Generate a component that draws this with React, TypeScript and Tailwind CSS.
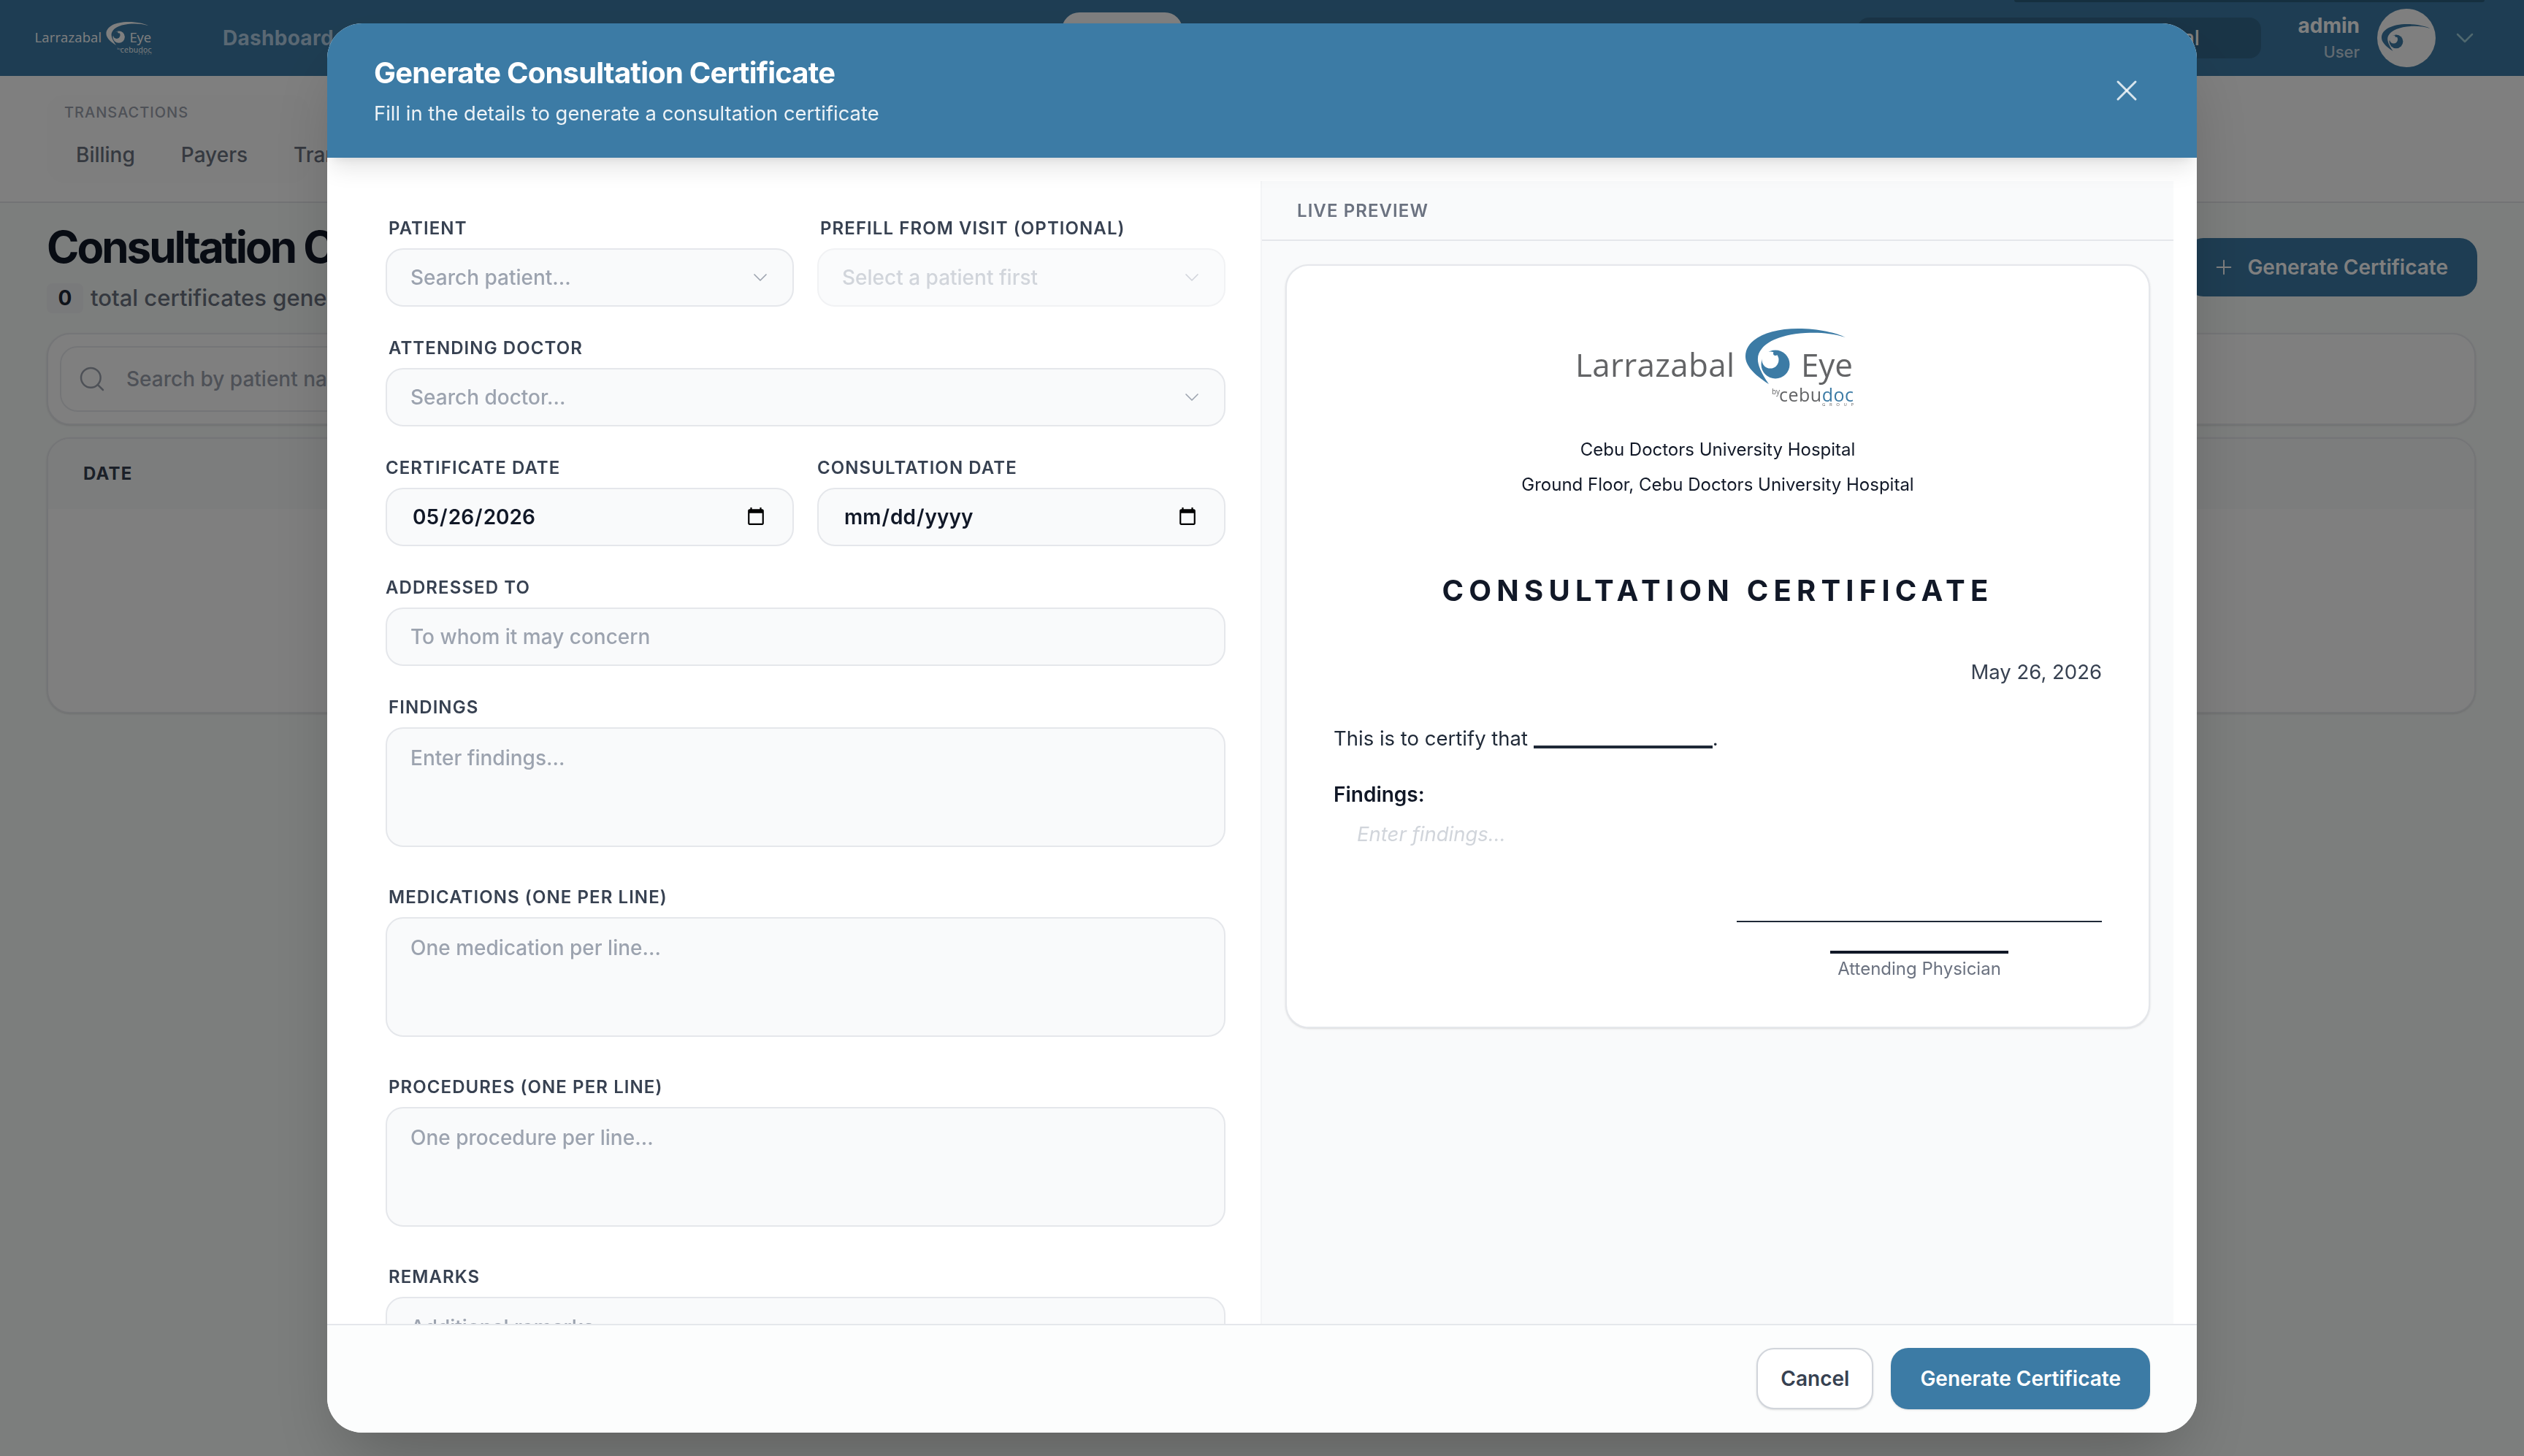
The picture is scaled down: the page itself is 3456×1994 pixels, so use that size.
import type { ReactNode } from "react";
import clsx from "clsx";
import { ChevronDown, Plus, Search, X } from "lucide-react";

const inputBox =
  "w-full rounded-[24px] border-2 border-[#e5e7eb] bg-[#f9fafb] text-[28px] font-medium text-[#111827] outline-none placeholder:text-[#9ca3af]";

const dateBox = "h-[80px] px-[34px] font-semibold";

function EyeMark({ color, spot }: { color: string; spot: string }) {
  return (
    <>
      <path
        d="M32 76C10 62 0 50 0 38C0 15 30 0 72 0C100 0 125 6 137 12C118 6 100 5 82 6C50 8 30 17 22 28C14 38 14 50 32 76Z"
        fill={color}
      />
      <circle cx="41" cy="49" r="19.5" fill={color} />
      <circle cx="34" cy="43" r="11.5" fill={spot} />
      <circle cx="41" cy="34" r="3" fill={color} />
    </>
  );
}

function Logo({ light, className }: { light?: boolean; className: string }) {
  const grey = light ? "#ffffff" : "#636466";
  const blue = light ? "#ffffff" : "#3c7ba5";
  return (
    <svg viewBox="0 0 388 107" className={clsx("overflow-visible", className)}>
      <g fontFamily="'Open Sans', sans-serif">
        <text x="-1" y="66" fontSize="44" fontWeight="400" fill={grey} textLength="218">
          Larrazabal
        </text>
        <text x="308" y="66" fontSize="44" fontWeight="400" fill={grey} textLength="71">
          Eye
        </text>
        <text x="268" y="90" fontSize="10" fill={grey}>
          by
        </text>
        <text x="278" y="100" fontSize="25" fill={grey} textLength="102">
          cebu<tspan fill={blue}>doc</tspan>
        </text>
        <text x="337" y="106" fontSize="6" fill={grey} textLength="43">
          GROUP
        </text>
      </g>
      <g transform="translate(232 0)">
        <EyeMark color={blue} spot={light ? "#3d7ba6" : "#ffffff"} />
      </g>
    </svg>
  );
}

function Field({
  label,
  indent,
  children,
}: {
  label: string;
  indent?: boolean;
  children: ReactNode;
}) {
  return (
    <div>
      <label
        className={clsx(
          "mb-[11px] block pt-[1px] text-[24px] leading-[32px] font-semibold tracking-[0.045em] text-[#374151]",
          indent && "ml-[4px]"
        )}
      >
        {label}
      </label>
      {children}
    </div>
  );
}

function Combo({ placeholder, disabled }: { placeholder: string; disabled?: boolean }) {
  return (
    <div
      className={clsx(
        "flex h-[80px] items-center rounded-[24px] border-2 pr-[28px] pl-[32px]",
        disabled ? "border-[#f1f2f4] bg-[#fafbfc]" : "border-[#e5e7eb] bg-[#f9fafb]"
      )}
    >
      <input
        disabled={disabled}
        placeholder={placeholder}
        className={clsx(
          "min-w-0 flex-1 bg-transparent text-[28px] font-medium outline-none",
          disabled ? "placeholder:text-[#d1d5db]" : "placeholder:text-[#9ca3af]"
        )}
      />
      <ChevronDown
        strokeWidth={1.25}
        className={clsx("h-[32px] w-[32px]", disabled ? "text-[#d1d5db]" : "text-[#9ca3af]")}
      />
    </div>
  );
}

function NoteField({ label, placeholder }: { label: string; placeholder: string }) {
  return (
    <div className="pb-[12px]">
      <Field label={label} indent>
        <textarea
          placeholder={placeholder}
          className={clsx(inputBox, "block h-[164px] resize-none px-[32px] py-[20px] leading-[40px]")}
        />
      </Field>
    </div>
  );
}

function CertificateForm() {
  return (
    <div className="w-[1278px] shrink-0 overflow-hidden pt-[80px] pr-[48px] pl-[80px]">
      <div className="flex flex-col gap-[40px]">
        <div className="grid grid-cols-2 gap-[32px]">
          <Field label="PATIENT" indent>
            <Combo placeholder="Search patient..." />
          </Field>
          <Field label="PREFILL FROM VISIT (OPTIONAL)" indent>
            <Combo placeholder="Select a patient first" disabled />
          </Field>
        </div>
        <Field label="ATTENDING DOCTOR" indent>
          <Combo placeholder="Search doctor..." />
        </Field>
        <div className="grid grid-cols-2 gap-[32px]">
          <Field label="CERTIFICATE DATE">
            <input type="date" defaultValue="2026-05-26" className={clsx(inputBox, dateBox)} />
          </Field>
          <Field label="CONSULTATION DATE">
            <input type="date" className={clsx(inputBox, dateBox)} />
          </Field>
        </div>
        <Field label="ADDRESSED TO">
          <input placeholder="To whom it may concern" className={clsx(inputBox, "h-[80px] px-[32px]")} />
        </Field>
        <NoteField label="FINDINGS" placeholder="Enter findings..." />
      </div>
      <div className="flex flex-col gap-[40px] pt-[40px]">
        <NoteField label="MEDICATIONS (ONE PER LINE)" placeholder="One medication per line..." />
        <NoteField label="PROCEDURES (ONE PER LINE)" placeholder="One procedure per line..." />
        <NoteField label="REMARKS" placeholder="Additional remarks..." />
      </div>
    </div>
  );
}

function LivePreview() {
  return (
    <div className="mt-[32px] flex-1 border-l-2 border-[#f3f4f6] bg-[#f9fafb]">
      <div className="flex h-[82px] items-center border-b-2 border-[#e5e7eb] px-[48px] pt-[1px] text-[24px] font-semibold tracking-[0.045em] text-[#6b7280]">
        LIVE PREVIEW
      </div>
      <div className="px-[32px] pt-[32px]">
        <div className="h-[1046px] rounded-[32px] border-2 border-[#e5e7eb] bg-white px-[64px] pt-[86px] shadow-sm">
          <Logo className="mx-auto block h-[107px] w-[388px]" />
          <p className="mt-[35px] text-center text-[24px] leading-[48px] text-[#111827]">
            Cebu Doctors University Hospital
            <br />
            Ground Floor, Cebu Doctors University Hospital
          </p>
          <h3 className="mt-[93px] text-center text-[40px] leading-[56px] font-bold tracking-[0.18em] text-[#111827]">
            CONSULTATION CERTIFICATE
          </h3>
          <p className="mt-[61px] text-right text-[27.5px] leading-[44px] text-[#374151]">May 26, 2026</p>
          <p className="mt-[47px] text-[27.5px] leading-[44px] text-[#1f2937]">
            This is to certify that{" "}
            <span className="inline-block h-[36px] w-[245px] border-b-4 border-[#1f2937] align-[-4px]" />.
          </p>
          <p className="mt-[33px] text-[28px] leading-[44px] font-semibold text-[#111827]">Findings:</p>
          <p className="mt-[10px] pl-[32px] text-[27.5px] leading-[44px] text-[#d1d5db] italic">Enter findings...</p>
          <div className="mt-[97px] ml-auto flex w-[500px] flex-col items-center">
            <div className="h-[2px] w-full bg-[#1f2937]" />
            <div className="mt-[39px] h-[4px] w-[244px] bg-[#111827]" />
            <p className="mt-[5px] text-[24px] leading-[32px] text-[#6b7280]">Attending Physician</p>
          </div>
        </div>
      </div>
    </div>
  );
}

function CertificateModal() {
  return (
    <div className="fixed inset-0 flex items-center justify-center bg-black/50 py-[32px]">
      <div className="flex h-full w-[2560px] flex-col overflow-hidden rounded-[48px] bg-white shadow-[0_50px_100px_-24px_rgba(0,0,0,0.25)]">
        <header className="relative z-10 flex h-[184px] shrink-0 items-center justify-between bg-[#3c7ba5] pr-[72px] pl-[64px] shadow-[0_20px_30px_-6px_rgba(0,0,0,0.1),0_8px_12px_-8px_rgba(0,0,0,0.1)]">
          <div>
            <h2 className="-mt-[1px] text-[40px] leading-[56px] font-bold tracking-[-0.02em] text-white">
              Generate Consultation Certificate
            </h2>
            <p className="mt-[7px] text-[27.4px] leading-[40px] text-white/90">
              Fill in the details to generate a consultation certificate
            </p>
          </div>
          <X strokeWidth={1.5} className="h-[48px] w-[48px] text-white/80" />
        </header>
        <div className="flex min-h-0 flex-1 pr-[32px]">
          <CertificateForm />
          <LivePreview />
        </div>
        <footer className="relative z-10 flex h-[149px] shrink-0 items-start justify-end gap-[24px] border-t-2 border-[#e5e7eb] bg-[#fcfdfd] px-[64px] pt-[31px]">
          <button className="h-[84px] rounded-[24px] border-2 border-[#d1d5db] bg-white px-[31px] text-[28px] font-semibold text-[#374151] shadow-sm">
            Cancel
          </button>
          <button className="h-[84px] rounded-[24px] bg-[#3c7ba5] px-[40px] text-[28px] font-semibold text-white shadow-sm">
            Generate Certificate
          </button>
        </footer>
      </div>
    </div>
  );
}

export default function App() {
  return (
    <div className="relative h-[1994px] overflow-hidden bg-[#f9fcfb] [font-family:Inter,sans-serif]">
      {/* Top bar */}
      <div className="relative flex h-[104px] items-center bg-[#3d7ba6] pr-[61px] pl-[48px]">
        <Logo light className="h-[45px] w-[163px]" />
        <span className="ml-[94px] text-[28px] font-bold tracking-[0.01em] text-[#b4d0e6]">Dashboard</span>
        <div className="ml-[997px] h-[70px] w-[165px] rounded-[24px] bg-white" />
        <div className="ml-[924px] flex h-[56px] w-[553px] items-center justify-end rounded-[16px] bg-black/15 pr-[84px] text-[28px] font-medium text-white">
          Portal
        </div>
        <div className="ml-auto text-right">
          <p className="text-[28px] leading-[36px] font-bold text-white">admin</p>
          <p className="pt-[2px] text-[22px] leading-[32px] font-medium text-white/70">User</p>
        </div>
        <div className="ml-[24px] flex h-[80px] w-[80px] shrink-0 items-center justify-center rounded-full border-4 border-white/20 bg-white">
          <svg viewBox="0 0 140 78" className="h-[38px] w-[68px]">
            <EyeMark color="#3d7ba6" spot="#ffffff" />
          </svg>
        </div>
        <ChevronDown strokeWidth={1.5} className="ml-[20px] h-[40px] w-[40px] text-[#9ed0dc]" />
        <div className="absolute top-0 left-[2758px] h-[3px] w-[644px] rounded-b-[8px] bg-[#2a5f7f]" />
      </div>

      {/* Section tabs */}
      <div className="h-[174px] border-b-2 border-[#e5e7eb] bg-white pt-[26px] pl-[64px]">
        <div className="h-[120px] w-[360px] rounded-[24px] bg-[#fcfcfc] pt-[10px] pl-[24px]">
          <p className="text-[20px] leading-[28px] font-medium tracking-[0.05em] text-[#9ca3af]">TRANSACTIONS</p>
          <div className="mt-[24px] flex gap-[63px] pl-[16px] text-[28px] leading-[40px] font-medium whitespace-nowrap text-[#6b7280]">
            <span>Billing</span>
            <span>Payers</span>
            <span>Transactions</span>
          </div>
        </div>
      </div>

      {/* Page content */}
      <div className="px-[64px]">
        <div className="flex items-start justify-between pt-[24px]">
          <div>
            <h1 className="text-[60px] leading-[72px] font-bold tracking-[-0.05em] text-[#111827]">
              Consultation Certificates
            </h1>
            <div className="mt-[11px] flex items-center gap-[10px]">
              <span className="flex h-[41px] w-[50px] items-center justify-center rounded-[8px] bg-[#f3f4f6] text-[28px] font-bold text-[#1f2937]">
                0
              </span>
              <span className="text-[31px] font-medium text-[#6b7280]">total certificates generated</span>
            </div>
          </div>
          <button className="mt-[24px] flex h-[80px] items-center gap-[16px] rounded-[24px] bg-[#3d7ba6] pr-[40px] pl-[36px] text-[28px] font-semibold text-white">
            <Plus strokeWidth={1.5} className="h-[32px] w-[32px]" />
            Generate Certificate
          </button>
        </div>
        <div className="mt-[24px] w-[3326px] rounded-[32px] border-2 border-[#e9ebee] bg-white p-[16px] shadow-sm">
          <div className="flex h-[90px] w-[2000px] items-center gap-[27px] rounded-[24px] border-2 border-[#e9ebee] px-[22px]">
            <Search strokeWidth={1.5} className="h-[40px] w-[40px] text-[#9ca3af]" />
            <span className="text-[28px] font-medium text-[#9ca3af]">Search by patient name</span>
          </div>
        </div>
        <div className="mt-[17px] h-[378px] w-[3326px] overflow-hidden rounded-[32px] border-2 border-[#e9ebee] bg-white shadow-sm">
          <div className="flex h-[96px] items-center bg-[#f9fafb] pl-[48px] text-[24px] font-bold tracking-[0.05em] text-[#374151]">
            DATE
          </div>
        </div>
      </div>

      <CertificateModal />
    </div>
  );
}
